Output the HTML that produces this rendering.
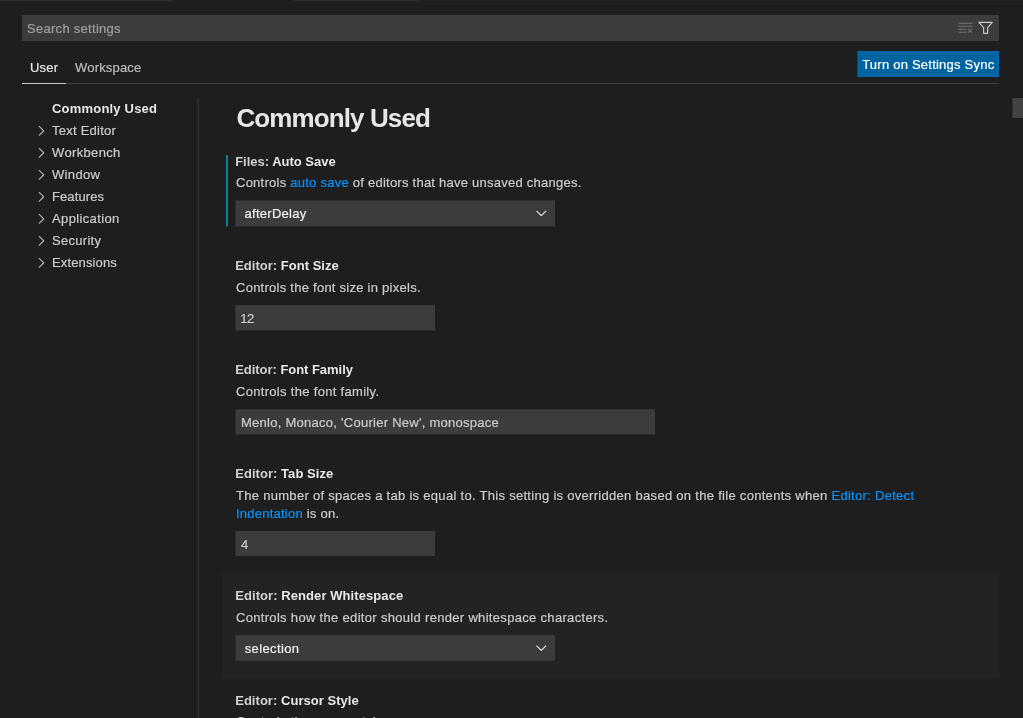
<!DOCTYPE html>
<html><head><meta charset="utf-8">
<style>
*{box-sizing:border-box;margin:0;padding:0}
html,body{width:1023px;height:718px;overflow:hidden;background:#1e1e1e}
body{position:relative;font-family:"Liberation Sans",sans-serif;font-size:13px;color:#cccccc}
.t{position:absolute;white-space:pre;line-height:16px}
b{font-weight:bold;color:#e7e7e7;-webkit-text-stroke-width:0}
b.k{color:#d2d2d2}
a{color:#0b93fc;text-decoration:none}
#L{position:absolute;left:0;top:0;width:1023px;height:718px;will-change:transform;-webkit-text-stroke-width:0.2px}
svg{position:absolute;left:0;top:0;overflow:visible}
</style></head><body>
<svg width="1023" height="718" viewBox="0 0 1023 718">
<rect x="0" y="0" width="174" height="1.2" fill="#2c2c2c"/>
<rect x="294" y="0" width="125" height="1.2" fill="#2c2c2c"/>
<rect x="419" y="0" width="604" height="1.2" fill="#242425"/>
<rect x="22" y="15" width="977" height="26" fill="#3c3c3c"/>
<rect x="22" y="83" width="977" height="1" fill="#404040"/>
<rect x="22" y="83" width="44" height="1" fill="#c6c6c6"/>
<rect x="858" y="51.5" width="140.5" height="25" fill="#0064a0" stroke="#006bb0" stroke-width="1"/>
<rect x="197.6" y="98" width="1.4" height="620" fill="#323232"/>
<rect x="1012.5" y="98" width="10.5" height="20" fill="#424242"/>
<rect x="222" y="574" width="777" height="105" fill="#222323"/>
<rect x="226" y="155" width="2" height="71.5" fill="#0c7d9d"/>
<rect x="235.5" y="200.4" width="319.5" height="26" fill="#3c3c3c"/>
<rect x="235.5" y="305.1" width="199.5" height="25.4" fill="#3c3c3c"/>
<rect x="235.5" y="409.2" width="419.5" height="25.3" fill="#3c3c3c"/>
<rect x="235.5" y="531.1" width="199.5" height="24.9" fill="#3c3c3c"/>
<rect x="235.5" y="635.1" width="319.5" height="25.7" fill="#3c3c3c"/>
<!-- clear all icon -->
<g transform="translate(957.6,19.8)" fill="#737373">
<path d="M10 12.6l.7.7 1.6-1.6 1.6 1.6.8-.7L13 11l1.7-1.6-.8-.8-1.6 1.7-1.6-1.7-.7.8 1.6 1.6-1.6 1.6zM1 4h14V3H1v1zm0 3h14V6H1v1zm8 2.5V9H1v1h8v-.5zM9 13v-1H1v1h8z"/>
</g>
<!-- filter icon -->
<g transform="translate(977.6,19.7)" fill="none" stroke="#c8c8c8" stroke-width="1.15" stroke-linejoin="round">
<path d="M1.3 2.6H14.7L10 8V13.6H6V8Z"/>
</g>
<!-- sidebar chevrons -->
<g fill="#c5c5c5" stroke="#c5c5c5" stroke-width="0.25">
<g id="chev"><path transform="translate(33,122.85)" d="M10.072 8.024L5.715 3.667l.618-.62L11 7.716v.618L6.333 13l-.618-.619 4.357-4.357z"/></g>
<use href="#chev" y="22"/><use href="#chev" y="44"/><use href="#chev" y="66"/><use href="#chev" y="88"/><use href="#chev" y="110"/><use href="#chev" y="132"/>
</g>
<!-- select chevrons -->
<g fill="#f0f0f0" stroke="#f0f0f0" stroke-width="0.3" stroke-linejoin="round">
<path id="cd" transform="translate(533.3,205)" d="M7.976 10.072l4.357-4.357.62.618L8.284 11h-.618L3 6.333l.619-.618 4.357 4.357z"/>
<use href="#cd" y="434.75"/>
</g>
</svg>
<div id="L">
<div class="t" id="s1" style="left:27px;top:21px;letter-spacing:0.285px;color:#9f9f9f">Search settings</div>
<div class="t" id="u1" style="left:30px;top:60px;letter-spacing:0.182px;color:#e7e7e7">User</div>
<div class="t" id="u2" style="left:75px;top:60px;letter-spacing:0.188px;color:#bebebe">Workspace</div>
<div class="t" id="b1" style="left:862.2px;top:57px;letter-spacing:0.229px;color:#ffffff">Turn on Settings Sync</div>
<div class="t" id="n0" style="left:52px;top:101px;letter-spacing:0.202px;color:#e7e7e7;font-weight:bold;-webkit-text-stroke-width:0">Commonly Used</div>
<div class="t" id="n1" style="left:52px;top:123px;letter-spacing:0.238px;">Text Editor</div>
<div class="t" id="n2" style="left:52px;top:145px;letter-spacing:0.348px;">Workbench</div>
<div class="t" id="n3" style="left:52px;top:167px;letter-spacing:0.350px;">Window</div>
<div class="t" id="n4" style="left:52px;top:189px;letter-spacing:0.098px;">Features</div>
<div class="t" id="n5" style="left:52px;top:211px;letter-spacing:0.369px;">Application</div>
<div class="t" id="n6" style="left:52px;top:233px;letter-spacing:0.290px;">Security</div>
<div class="t" id="n7" style="left:52px;top:255px;letter-spacing:0.134px;">Extensions</div>
<div class="t" id="h1" style="left:236.4px;top:102px;letter-spacing:-0.888px;font-size:26px;line-height:32px;font-weight:bold;color:#e7e7e7;-webkit-text-stroke-width:0">Commonly Used</div>
<div class="t" id="a1" style="left:235.2px;top:154px;letter-spacing:-0.011px;"><b class="k">Files: </b><b>Auto Save</b></div>
<div class="t" id="a2" style="left:236px;top:175px;letter-spacing:0.248px;">Controls <a>auto save</a> of editors that have unsaved changes.</div>
<div class="t" id="a3" style="left:244.6px;top:206px;letter-spacing:0.261px;color:#f0f0f0">afterDelay</div>
<div class="t" id="c1" style="left:235.2px;top:258px;letter-spacing:0.014px;"><b class="k">Editor: </b><b>Font Size</b></div>
<div class="t" id="c2" style="left:236px;top:280px;letter-spacing:0.256px;">Controls the font size in pixels.</div>
<div class="t" id="c3" style="left:240.3px;top:311px;letter-spacing:-0.569px;">12</div>
<div class="t" id="d1" style="left:235.2px;top:362px;letter-spacing:-0.039px;"><b class="k">Editor: </b><b>Font Family</b></div>
<div class="t" id="d2" style="left:236px;top:384px;letter-spacing:0.309px;">Controls the font family.</div>
<div class="t" id="d3" style="left:241px;top:415px;letter-spacing:0.263px;">Menlo, Monaco, 'Courier New', monospace</div>
<div class="t" id="e1" style="left:235.2px;top:466px;letter-spacing:0.048px;"><b class="k">Editor: </b><b>Tab Size</b></div>
<div class="t" id="e2" style="left:236px;top:488px;letter-spacing:0.294px;">The number of spaces a tab is equal to. This setting is overridden based on the file contents when <a>Editor: Detect</a></div>
<div class="t" id="e2b" style="left:236px;top:506px;letter-spacing:0.233px;"><a>Indentation</a> is on.</div>
<div class="t" id="e3" style="left:241px;top:537px;letter-spacing:0.000px;">4</div>
<div class="t" id="f1" style="left:235.2px;top:588px;letter-spacing:0.077px;"><b class="k">Editor: </b><b>Render Whitespace</b></div>
<div class="t" id="f2" style="left:236px;top:610px;letter-spacing:0.316px;">Controls how the editor should render whitespace characters.</div>
<div class="t" id="f3" style="left:244.75px;top:641px;letter-spacing:0.367px;color:#f0f0f0">selection</div>
<div class="t" id="g1" style="left:235.2px;top:693px;letter-spacing:0.036px;"><b class="k">Editor: </b><b>Cursor Style</b></div>
<div class="t" id="g2" style="left:236px;top:714px;letter-spacing:0.289px;">Controls the cursor style.</div>
</div></body></html>
